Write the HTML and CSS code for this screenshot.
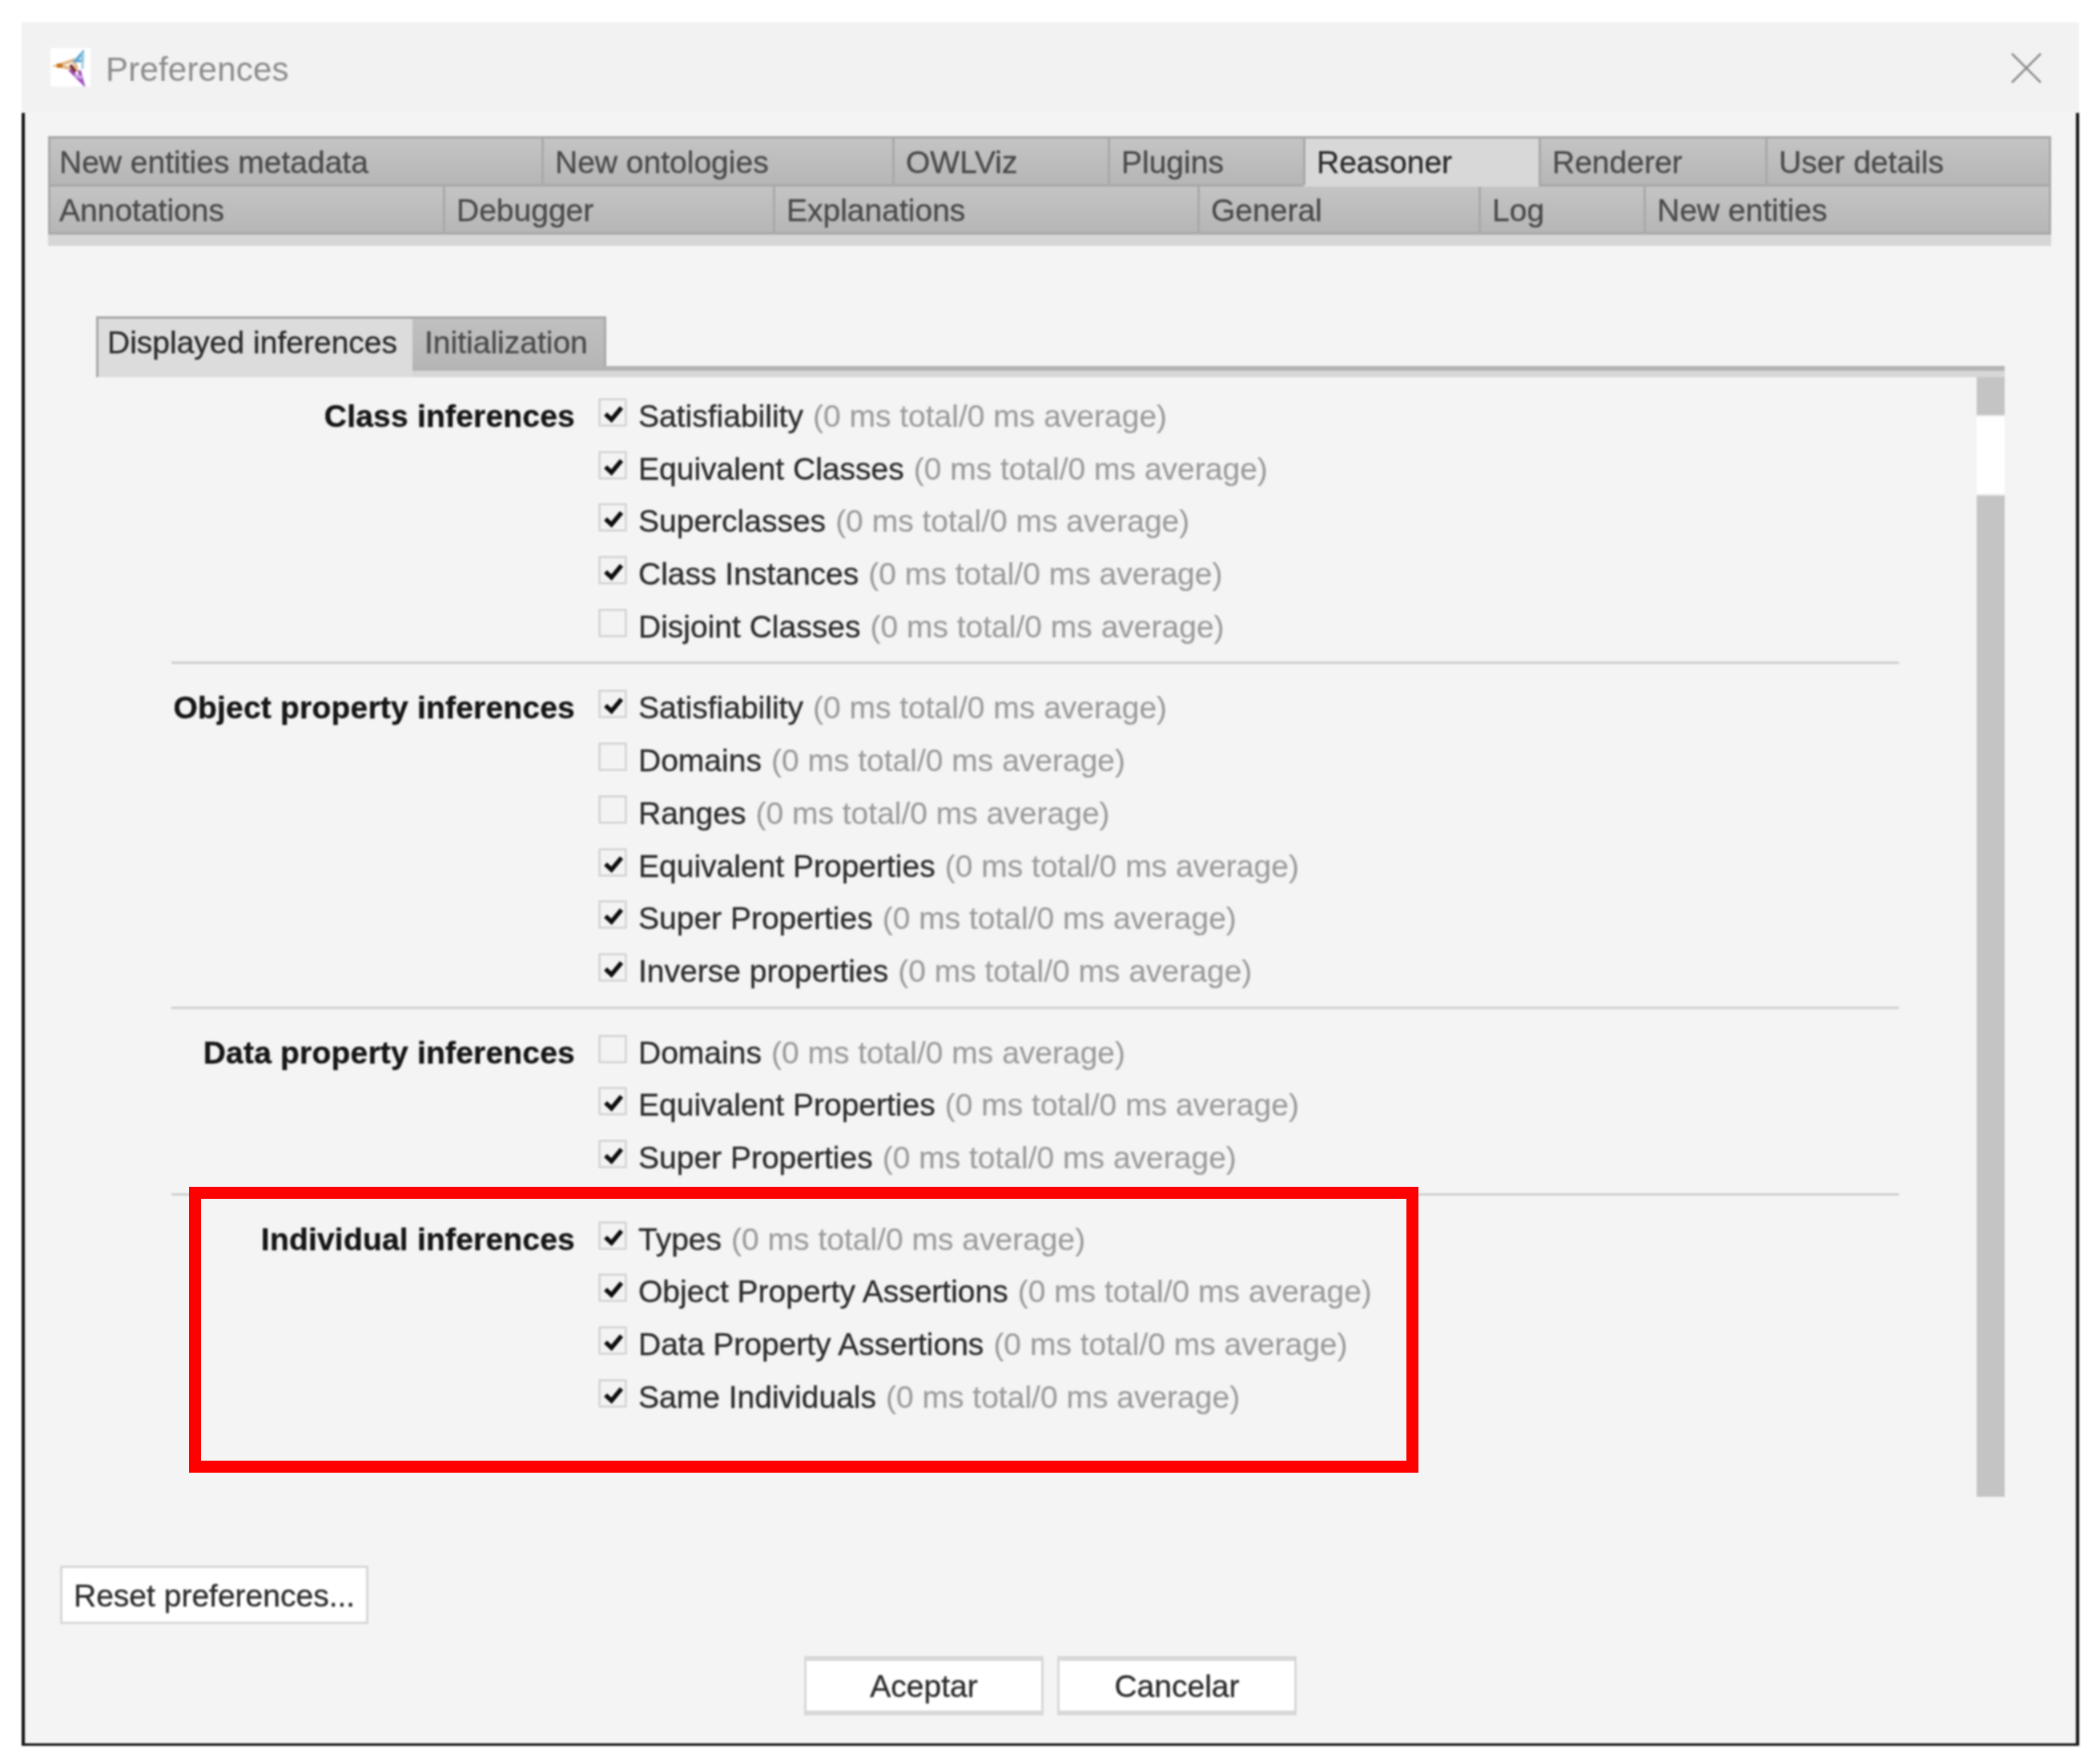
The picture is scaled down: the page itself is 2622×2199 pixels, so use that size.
FILE: index.html
```html
<!DOCTYPE html>
<html lang="en">
<head>
<meta charset="utf-8">
<title>Preferences</title>
<link rel="stylesheet" href="styles.css">
</head>
<body>
<div class="window">
  <div class="dialog">
    <header class="titlebar">
      <span class="app-icon">
        <svg width="50" height="48" viewBox="0 0 50 48" fill="none">
          <path d="M9 22 L29 15 L33 27 Z" stroke="#e2b98c" stroke-width="4"/>
          <path d="M8 22 H15" stroke="#c8701a" stroke-width="5"/>
          <path d="M40 6 L31 16 L40 16 Z" stroke="#5fa8d3" stroke-width="3.5"/>
          <path d="M40 6 V26" stroke="#9ccbe4" stroke-width="3"/>
          <path d="M24 27 L40 43 L36 28" stroke="#a24fc0" stroke-width="4"/>
          <path d="M30 34 L40 37" stroke="#cfa4e2" stroke-width="4"/>
          <path d="M25 21 L31 30" stroke="#7a3030" stroke-width="4"/>
        </svg>
      </span>
      <span class="title">Preferences</span>
      <svg class="close" width="38" height="38" viewBox="0 0 38 38" fill="none"><path d="M1 1 L37 37 M37 1 L1 37" stroke="#8a8a8a" stroke-width="2.6"/></svg>
    </header>
    <main class="body">
      <nav class="tabs">
        <div class="tab-row row-a">
          <span class="tab">New entities metadata</span><span class="tab">New ontologies</span><span class="tab">OWLViz</span><span class="tab">Plugins</span><span class="tab active">Reasoner</span><span class="tab">Renderer</span><span class="tab">User details</span>
        </div>
        <div class="tab-row row-b">
          <span class="tab">Annotations</span><span class="tab">Debugger</span><span class="tab">Explanations</span><span class="tab">General</span><span class="tab">Log</span><span class="tab">New entities</span>
        </div>
      </nav>

      <div class="subtabs">
        <span class="subtab active">Displayed inferences</span><span class="subtab">Initialization</span>
      </div>

      <div class="panel">
        <div class="form">
          <section class="group">
            <h3 class="group-label">Class inferences</h3>
            <ul class="opts">
              <li class="opt"><span class="cb on"><svg viewBox="0 0 36 36"><path d="M9 20 L16.5 27 L29 12"/></svg></span><span class="name">Satisfiability</span> <span class="stat">(0 ms total/0 ms average)</span></li>
              <li class="opt"><span class="cb on"><svg viewBox="0 0 36 36"><path d="M9 20 L16.5 27 L29 12"/></svg></span><span class="name">Equivalent Classes</span> <span class="stat">(0 ms total/0 ms average)</span></li>
              <li class="opt"><span class="cb on"><svg viewBox="0 0 36 36"><path d="M9 20 L16.5 27 L29 12"/></svg></span><span class="name">Superclasses</span> <span class="stat">(0 ms total/0 ms average)</span></li>
              <li class="opt"><span class="cb on"><svg viewBox="0 0 36 36"><path d="M9 20 L16.5 27 L29 12"/></svg></span><span class="name">Class Instances</span> <span class="stat">(0 ms total/0 ms average)</span></li>
              <li class="opt"><span class="cb"></span><span class="name">Disjoint Classes</span> <span class="stat">(0 ms total/0 ms average)</span></li>
            </ul>
          </section>
          <section class="group">
            <h3 class="group-label">Object property inferences</h3>
            <ul class="opts">
              <li class="opt"><span class="cb on"><svg viewBox="0 0 36 36"><path d="M9 20 L16.5 27 L29 12"/></svg></span><span class="name">Satisfiability</span> <span class="stat">(0 ms total/0 ms average)</span></li>
              <li class="opt"><span class="cb"></span><span class="name">Domains</span> <span class="stat">(0 ms total/0 ms average)</span></li>
              <li class="opt"><span class="cb"></span><span class="name">Ranges</span> <span class="stat">(0 ms total/0 ms average)</span></li>
              <li class="opt"><span class="cb on"><svg viewBox="0 0 36 36"><path d="M9 20 L16.5 27 L29 12"/></svg></span><span class="name">Equivalent Properties</span> <span class="stat">(0 ms total/0 ms average)</span></li>
              <li class="opt"><span class="cb on"><svg viewBox="0 0 36 36"><path d="M9 20 L16.5 27 L29 12"/></svg></span><span class="name">Super Properties</span> <span class="stat">(0 ms total/0 ms average)</span></li>
              <li class="opt"><span class="cb on"><svg viewBox="0 0 36 36"><path d="M9 20 L16.5 27 L29 12"/></svg></span><span class="name">Inverse properties</span> <span class="stat">(0 ms total/0 ms average)</span></li>
            </ul>
          </section>
          <section class="group">
            <h3 class="group-label">Data property inferences</h3>
            <ul class="opts">
              <li class="opt"><span class="cb"></span><span class="name">Domains</span> <span class="stat">(0 ms total/0 ms average)</span></li>
              <li class="opt"><span class="cb on"><svg viewBox="0 0 36 36"><path d="M9 20 L16.5 27 L29 12"/></svg></span><span class="name">Equivalent Properties</span> <span class="stat">(0 ms total/0 ms average)</span></li>
              <li class="opt"><span class="cb on"><svg viewBox="0 0 36 36"><path d="M9 20 L16.5 27 L29 12"/></svg></span><span class="name">Super Properties</span> <span class="stat">(0 ms total/0 ms average)</span></li>
            </ul>
          </section>
          <section class="group last">
            <h3 class="group-label">Individual inferences</h3>
            <ul class="opts">
              <li class="opt"><span class="cb on"><svg viewBox="0 0 36 36"><path d="M9 20 L16.5 27 L29 12"/></svg></span><span class="name">Types</span> <span class="stat">(0 ms total/0 ms average)</span></li>
              <li class="opt"><span class="cb on"><svg viewBox="0 0 36 36"><path d="M9 20 L16.5 27 L29 12"/></svg></span><span class="name">Object Property Assertions</span> <span class="stat">(0 ms total/0 ms average)</span></li>
              <li class="opt"><span class="cb on"><svg viewBox="0 0 36 36"><path d="M9 20 L16.5 27 L29 12"/></svg></span><span class="name">Data Property Assertions</span> <span class="stat">(0 ms total/0 ms average)</span></li>
              <li class="opt"><span class="cb on"><svg viewBox="0 0 36 36"><path d="M9 20 L16.5 27 L29 12"/></svg></span><span class="name">Same Individuals</span> <span class="stat">(0 ms total/0 ms average)</span></li>
            </ul>
          </section>
        </div>
        <div class="scrollbar"><span class="thumb"></span></div>
      </div>

      <button class="btn reset" type="button">Reset preferences...</button>
      <div class="actions">
        <button class="btn action" type="button">Aceptar</button>
        <button class="btn action" type="button">Cancelar</button>
      </div>
    </main>
  </div>
  <div class="highlight"></div>
</div>
</body>
</html>
```
FILE: styles.css
```css
* { box-sizing: border-box; }
html, body { margin: 0; padding: 0; background: #fff; }
body {
  width: 2622px;
  height: 2199px;
  overflow: hidden;
  font-family: "Liberation Sans", Arial, sans-serif;
  font-size: 39px;
  color: #2b2b2b;
  -webkit-text-stroke: 0.35px currentColor;
}
.window {
  position: relative;
  width: 2569px;
  margin: 28px 0 0 27px;
}
.dialog { filter: blur(0.8px); }
.titlebar {
  display: flex;
  align-items: center;
  height: 113px;
  background: #f2f2f2;
  padding: 5px 47px 0 36px;
}
.app-icon {
  display: flex;
  width: 50px;
  height: 48px;
  background: #fff;
  margin: -6px 19px 0 0;
}
.title { font-size: 42px; letter-spacing: 0.2px; color: #8c8c8c; flex: 1; -webkit-text-stroke: 0; }
.close { display: block; margin-top: -5px; }

.body {
  background: #f4f4f4;
  border: solid #111;
  border-width: 0 4px 3px;
  height: 2039px;
  padding: 29px 0 0;
}
.tabs {
  margin: 0 31px 0 29px;
  border-bottom: 14px solid #d6d6d6;
}
.tab-row { display: grid; }
.row-a { grid-template-columns: 616px 438px 269px 244px 294px 283px 357px; height: 63px; }
.row-b { grid-template-columns: 493px 412px 530px 351px 206px 509px; height: 60px; }
.tab {
  display: flex;
  align-items: center;
  padding-left: 14px;
  padding-top: 2px;
  color: #4a4a4a;
  line-height: 1;
  background: linear-gradient(#c4c4c4, #b6b6b6);
  border: solid #a9a9a9;
  border-width: 3px 0 3px 3px;
}
.tab:first-child { padding-left: 11px; }
.row-b .tab { border-top-width: 0; }
.tab:last-child { border-right-width: 3px; }
.tab.active { background: #d8d8d8; color: #2c2c2c; border-bottom-color: #d8d8d8; }

.subtabs {
  display: flex;
  align-items: flex-end;
  margin: 88px 89px 0;
  height: 76px;
  border-bottom: 8px solid #d7d7d7;
  box-shadow: inset 0 -6px 0 #b4b4b4;
}
.subtab {
  display: flex;
  align-items: center;
  height: 62px;
  margin-bottom: 6px;
  padding-left: 15px;
  background: linear-gradient(#c0c0c0, #b6b6b6);
  border: solid #a9a9a9;
  border-width: 3px 3px 0 0;
  color: #4a4a4a;
  width: 242px;
}
.subtab.active {
  width: 395px;
  height: 76px;
  margin-bottom: -8px;
  padding-bottom: 14px;
  background: #dcdcdc;
  color: #2b2b2b;
  border-left-width: 3px;
  border-right-width: 0;
  padding-left: 11px;
  position: relative;
  z-index: 1;
}

.panel {
  display: flex;
  margin: 0 89px;
  height: 1398px;
}
.form { flex: 1; padding: 16px 97px 0 94px; }
.group {
  display: grid;
  grid-template-columns: 504px 1fr;
  column-gap: 29px;
  padding: 22px 0 11px;
  border-bottom: 3px solid #d0d0d0;
}
.group:first-child { padding-top: 0; }
.group.last { border-bottom: 0; }
.group-label {
  margin: 0;
  font-size: 39px;
  font-weight: 700;
  letter-spacing: 0.2px;
  text-align: right;
  line-height: 65.7px;
  color: #151515;
  white-space: nowrap;
}
.opts { list-style: none; margin: 0; padding: 0; }
.opt {
  display: flex;
  align-items: flex-start;
  height: 65.7px;
  line-height: 65.7px;
  white-space: pre;
}
.cb {
  flex: none;
  width: 36px;
  height: 36px;
  margin: 10px 14px 0 0;
  background: #f3f3f3;
  border: 3px solid #d6d6d6;
  box-shadow: 0 0 0 1px #fbfbfb;
  position: relative;
}
.cb svg {
  position: absolute;
  left: -3px;
  top: -3px;
  width: 36px;
  height: 36px;
  fill: none;
  stroke: #0d0d0d;
  stroke-width: 5.5px;
}
.name { color: #2b2b2b; }
.stat { color: #9b9b9b; margin-left: 12px; -webkit-text-stroke: 0.15px currentColor; }

.scrollbar {
  flex: none;
  width: 35px;
  padding: 49px 0 0;
  background: #c4c4c4;
}
.thumb {
  display: block;
  height: 97px;
  background: #fff;
  box-shadow: 0 -2px 0 #e8e8e8, 0 2px 0 #e8e8e8;
}

.btn {
  display: block;
  font: inherit;
  color: #2b2b2b;
  background: #fff;
  border: 3px solid #d8d8d8;
  padding: 0;
}
.reset {
  width: 385px;
  height: 73px;
  margin: 86px 0 0 44px;
  text-align: left;
  padding: 2px 0 0 14px;
}
.actions {
  display: flex;
  justify-content: center;
  gap: 17px;
  margin-top: 40px;
}
.action {
  width: 299px;
  height: 74px;
  border-width: 6px 3px;
  padding-top: 2px;
}
.highlight {
  position: absolute;
  left: 209px;
  top: 1454px;
  width: 1535px;
  height: 357px;
  border: 15px solid #ff0000;
}
```
